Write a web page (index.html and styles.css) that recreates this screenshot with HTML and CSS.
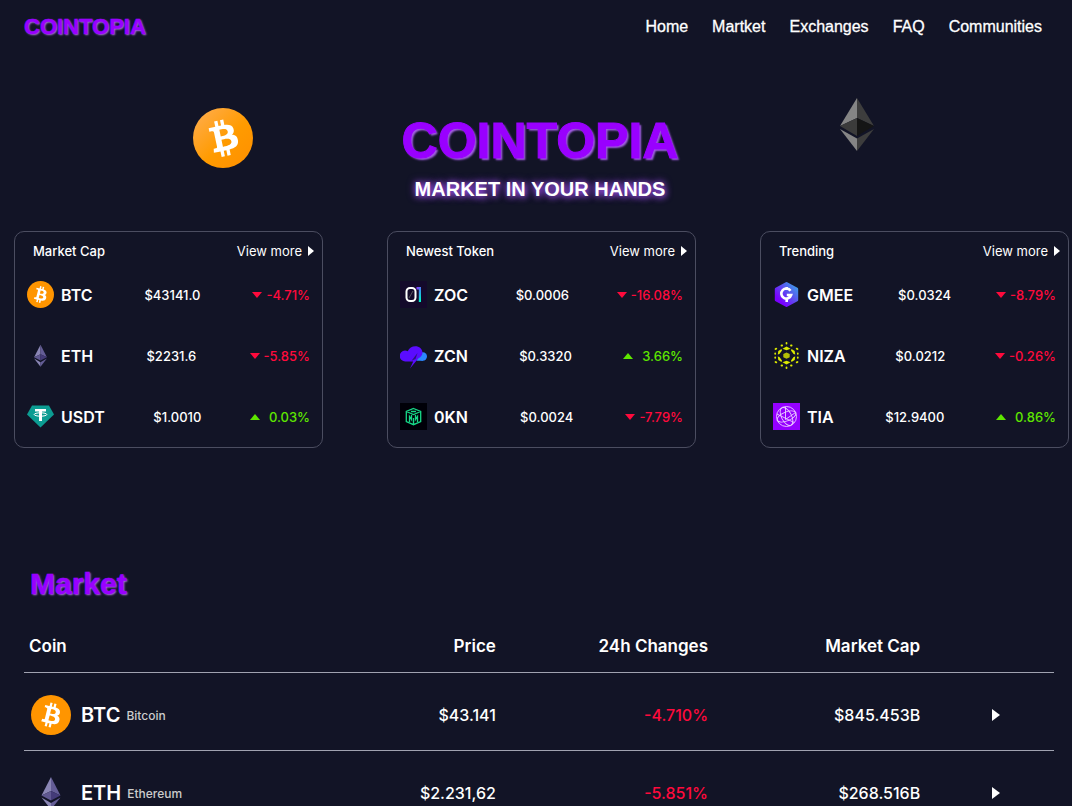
FILE: index.html
```html
<!DOCTYPE html>
<html lang="en">
<head>
<meta charset="utf-8">
<meta name="viewport" content="width=device-width, initial-scale=1">
<title>Cointopia</title>
<link rel="stylesheet" href="styles.css">
</head>
<body>
<svg class="defs" aria-hidden="true">
  <defs>
    <linearGradient id="orange" x1="0" y1="0" x2="1" y2="1"><stop offset="0.1" stop-color="#ffab45"/><stop offset="0.55" stop-color="#ff9b00"/><stop offset="1" stop-color="#ff8f00"/></linearGradient>
    <linearGradient id="gm" x1="1" y1="0" x2="0.2" y2="0.8"><stop offset="0" stop-color="#3aa8e8"/><stop offset="0.5" stop-color="#5a55ee"/><stop offset="1" stop-color="#7a00ff"/></linearGradient>
    <linearGradient id="one" x1="0" y1="0" x2="0.6" y2="1"><stop offset="0.1" stop-color="#8b3dff"/><stop offset="0.5" stop-color="#3c8df0"/><stop offset="1" stop-color="#00f0c8"/></linearGradient>
  </defs>
  <symbol id="b-sign" viewBox="0 0 32 32"><path d="M23.189 14.02c.314-2.096-1.283-3.223-3.465-3.975l.708-2.84-1.728-.43-.69 2.765c-.454-.114-.92-.22-1.385-.326l.695-2.783L15.596 6l-.708 2.839c-.376-.086-.746-.17-1.104-.26l.002-.009-2.384-.595-.46 1.846s1.283.294 1.256.312c.7.175.826.638.805 1.006l-.806 3.235c.048.012.11.03.18.057l-.183-.045-1.13 4.532c-.086.212-.303.531-.793.41.018.025-1.256-.313-1.256-.313l-.858 1.978 2.25.561c.418.105.828.215 1.231.318l-.715 2.872 1.727.43.708-2.84c.472.127.93.245 1.378.357l-.706 2.828 1.728.43.715-2.866c2.948.558 5.164.333 6.097-2.333.752-2.146-.037-3.385-1.588-4.192 1.13-.26 1.98-1.003 2.207-2.538zm-3.95 5.538c-.533 2.147-4.148.986-5.32.695l.95-3.805c1.172.293 4.929.872 4.37 3.11zm.535-5.569c-.487 1.953-3.495.96-4.47.717l.86-3.45c.975.243 4.118.696 3.61 2.733z"/></symbol>
  <symbol id="btc" viewBox="0 0 32 32"><circle cx="16" cy="16" r="16" fill="#ff9500"/><use href="#b-sign" fill="#fff"/></symbol>
  <symbol id="eth" viewBox="0 0 40 40"><path fill="#8a86b5" d="M20 4v14L10.500 22.500z"/><path fill="#645d96" d="M20 4v14L29.500 22.500z"/><path fill="#5f5891" d="M20 18v9.500L10.500 22.500z"/><path fill="#443b78" d="M20 18v9.500L29.500 22.500z"/><path fill="#8a86b5" d="M10.500 24.500L20 30v6.500z"/><path fill="#645d96" d="M29.500 24.500L20 30v6.500z"/></symbol>
</svg>

<header class="topbar">
  <a class="logo" href="#">COINTOPIA</a>
  <nav class="nav">
    <a href="#">Home</a><a href="#market">Martket</a><a href="#">Exchanges</a><a href="#">FAQ</a><a href="#">Communities</a>
  </nav>
</header>

<main>
  <section class="hero">
    <svg class="hero-btc" viewBox="0 0 32 32" aria-hidden="true"><circle cx="16" cy="16" r="16" fill="url(#orange)"/><use href="#b-sign" fill="#fff" transform="rotate(-26 16 16)"/></svg>
    <div class="hero-text">
      <h1 class="title">COINTOPIA</h1>
      <p class="tagline">MARKET IN YOUR HANDS</p>
    </div>
    <svg class="hero-eth" viewBox="0 0 34 54" aria-hidden="true"><path fill="#858585" d="M17 0v20L0 28z"/><path fill="#3d3d3d" d="M17 0v20l17 8z"/><path fill="#3b3b3b" d="M17 20v18L0 28z"/><path fill="#151515" d="M17 20v18l17-10z"/><path fill="#858585" d="M0 31l17 9.500V53z"/><path fill="#3d3d3d" d="M34 31l-17 9.500V53z"/></svg>
  </section>

  <section class="cards">
    <article class="card">
      <header class="card-head"><h2 class="card-title">Market Cap</h2><a class="more" href="#">View more<span class="arrow"></span></a></header>
      <ul class="coins">
        <li class="coin"><span class="coin-id"><svg class="icon" viewBox="0 0 32 32"><use href="#btc"/></svg>BTC</span><span class="price">$43141.0</span><span class="change down">-4.71%</span></li>
        <li class="coin"><span class="coin-id"><svg class="icon" viewBox="0 0 40 40"><use href="#eth"/></svg>ETH</span><span class="price">$2231.6</span><span class="change down">-5.85%</span></li>
        <li class="coin"><span class="coin-id"><svg class="icon" viewBox="0 0 27 27"><path fill="#0c9c92" d="M5 2.500h17L27 11.500 13.500 24.500 0 11.500z"/><path fill="#fff" d="M8 6h11v2.400h-4V18h-3V8.400H8z"/><ellipse cx="13.500" cy="11.500" rx="6.300" ry="1.700" fill="none" stroke="#fff"/></svg>USDT</span><span class="price">$1.0010</span><span class="change up">0.03%</span></li>
      </ul>
    </article>
    <article class="card">
      <header class="card-head"><h2 class="card-title">Newest Token</h2><a class="more" href="#">View more<span class="arrow"></span></a></header>
      <ul class="coins">
        <li class="coin"><span class="coin-id"><svg class="icon" viewBox="0 0 27 27"><path fill="#140a2b" d="M0 0h27v27H0z"/><rect x="6.500" y="7" width="9" height="13" rx="3.500" fill="none" stroke="#fff" stroke-width="2"/><path d="M9 17l4-7" stroke="#777" stroke-width=".7"/><path fill="url(#one)" d="M16.500 6H21v15h-2.200V8.500h-2.300z"/></svg>ZOC</span><span class="price">$0.0006</span><span class="change down">-16.08%</span></li>
        <li class="coin"><span class="coin-id"><svg class="icon" viewBox="0 0 27 27"><circle cx="22.800" cy="14.500" r="4.200" fill="#2b86ff"/><path fill="#2b86ff" d="M15 16h8v2.700h-6z"/><path fill="#5a0cff" d="M5 8.500c1 0 2 .2 2.800.7C9.200 6 12 4.200 15.300 4.200c4 0 7 2.600 7.200 6.300 0 2.500-1.500 4.500-4 5.800L10 26.500l3.200-7H5.500A5.200 5.200 0 0 1 5 8.500z"/><path fill="#121426" d="M17.500 11l-6 7.800 4-1.800z" opacity=".6"/></svg>ZCN</span><span class="price">$0.3320</span><span class="change up">3.66%</span></li>
        <li class="coin"><span class="coin-id"><svg class="icon" viewBox="0 0 27 27"><path fill="#000008" d="M0 0h27v27H0z"/><path fill="none" stroke="#17d888" stroke-width="1.300" d="M13.500 5.500l7.200 3v10l-7.200 3.200-7.200-3.200v-10zM6.300 8.500l7.200 3 7.200-3M13.500 15v6.500M9.500 19v-5.500l2 3V12M17.500 19v-5.500l-2 3V12M11 8.500h5"/></svg>0KN</span><span class="price">$0.0024</span><span class="change down">-7.79%</span></li>
      </ul>
    </article>
    <article class="card">
      <header class="card-head"><h2 class="card-title">Trending</h2><a class="more" href="#">View more<span class="arrow"></span></a></header>
      <ul class="coins">
        <li class="coin"><span class="coin-id"><svg class="icon" viewBox="0 0 27 27"><path fill="url(#gm)" stroke="url(#gm)" stroke-width="3" stroke-linejoin="round" d="M13.500 2.500l10.200 5.500v11l-10.200 5.500L3.300 19V8z"/><path fill="none" stroke="#fff" stroke-width="2.600" d="M17.500 9.800a5 5 0 1 0 .6 4.200h-4.300M13.700 6v3M13.700 18v3"/></svg>GMEE</span><span class="price">$0.0324</span><span class="change down">-8.79%</span></li>
        <li class="coin"><span class="coin-id"><svg class="icon" viewBox="0 0 27 27"><g fill="#dcea00"><path d="M13.500 4.500l4 2.200-4 1.500-4-1.500zM13.500 22.500l4-2.200-4-1.500-4 1.500zM5.300 9l3.200-2 .5 1.500-2.600 3.500-1.600.5zM21.700 9l-3.200-2-.5 1.500 2.600 3.500 1.600.5zM5.300 18l3.200 2 .5-1.500L6.400 15l-1.600-.5zM21.700 18l-3.200 2-.5-1.500 2.600-3.500 1.600-.5z"/><path d="M10.300 12l3.200-1.500 3.200 1.500v3.200l-3.200 1.500-3.200-1.500z" opacity=".8"/></g><g fill="none" stroke="#dcea00" stroke-width="1.800" stroke-linecap="round"><path d="M13.500 1v.5M13.500 25.500v.5M8.500 3.500h.6M18 3.500h.6M8.500 23.500h.6M18 23.500h.6M2.500 7l.8-.4M24.500 7l-.8-.4M2.500 20l.8.4M24.500 20l-.8.4M2.200 11.500v.3M24.800 11.500v.3M2.200 15.500v.3M24.800 15.500v.3"/></g></svg>NIZA</span><span class="price">$0.0212</span><span class="change down">-0.26%</span></li>
        <li class="coin"><span class="coin-id"><svg class="icon" viewBox="0 0 27 27"><path fill="#9500ff" d="M0 0h27v27H0z"/><g fill="none" stroke="#ecd0ff" stroke-width=".9"><circle cx="13.500" cy="13.500" r="10"/><ellipse cx="13.500" cy="13.500" rx="10" ry="4.500" transform="rotate(-22 13.500 13.500)"/><ellipse cx="13.500" cy="13.500" rx="9.800" ry="5" transform="rotate(62 13.500 13.500)"/><path d="M12.500 4v12.500l10-7M4 11l17 8.500"/></g></svg>TIA</span><span class="price">$12.9400</span><span class="change up">0.86%</span></li>
      </ul>
    </article>
  </section>

  <section class="market" id="market">
    <h2 class="market-title">Market</h2>
    <table class="table">
      <thead>
        <tr><th class="col-coin" scope="col">Coin</th><th class="col-price" scope="col">Price</th><th class="col-num" scope="col">24h Changes</th><th class="col-num" scope="col">Market Cap</th><td class="col-go"></td></tr>
      </thead>
      <tbody>
        <tr><td><div class="asset"><svg class="asset-icon" viewBox="0 0 32 32"><use href="#btc"/></svg><b class="symbol">BTC</b><span class="name">Bitcoin</span></div></td><td>$43.141</td><td class="loss">-4.710%</td><td>$845.453B</td><td><a class="go" href="#" aria-label="Bitcoin details"><span class="arrow arrow-lg"></span></a></td></tr>
        <tr><td><div class="asset"><svg class="asset-icon" viewBox="0 0 40 40"><use href="#eth"/></svg><b class="symbol">ETH</b><span class="name">Ethereum</span></div></td><td>$2.231,62</td><td class="loss">-5.851%</td><td>$268.516B</td><td><a class="go" href="#" aria-label="Ethereum details"><span class="arrow arrow-lg"></span></a></td></tr>
      </tbody>
    </table>
  </section>
</main>
</body>
</html>
```
FILE: styles.css
```css
* {
  box-sizing: border-box;
}

body {
  margin: 0;
  height: 100vh;
  overflow-y: auto;
  scrollbar-width: none;
  background: #121426;
  color: #fff;
  font-family: Inter, "Liberation Sans", sans-serif;
}

h1, h2, p, ul {
  margin: 0;
  padding: 0;
}

a {
  color: inherit;
  text-decoration: none;
}

.defs {
  position: absolute;
  width: 0;
  height: 0;
}

.topbar {
  display: flex;
  align-items: center;
  justify-content: space-between;
  height: 54px;
  padding: 0 30px 0 24px;
  font-family: "Liberation Sans", Arial, sans-serif;
}

.logo,
.title,
.market-title {
  color: #9900ff;
  font-family: "Liberation Sans", Arial, sans-serif;
  font-weight: 700;
  text-shadow: 2px 2px 2px #a45fe6;
}

.logo,
.market-title {
  text-shadow: 1px 1px 2px #b47ae8;
  -webkit-text-stroke: 0.5px #9900ff;
}

.logo {
  font-size: 22px;
}

.title {
  font-size: 50px;
  line-height: 58px;
  -webkit-text-stroke: 1px #9900ff;
}

.nav {
  display: flex;
  gap: 24px;
  font-size: 16px;
  -webkit-text-stroke: 0.3px #fff;
}

.hero {
  display: grid;
  grid-template-columns: 1fr 1fr 1fr;
  justify-items: center;
  height: 177px;
  padding: 44px 56px 0 64px;
}

.hero-btc {
  width: 60px;
  height: 60px;
  margin-top: 10px;
}

.hero-eth {
  width: 34px;
  height: 54px;
}

.hero-text {
  padding-top: 14px;
  text-align: center;
  font-family: "Liberation Sans", Arial, sans-serif;
}

.tagline {
  padding-top: 7px;
  font-size: 20px;
  line-height: 24px;
  font-weight: 700;
  white-space: nowrap;
  text-shadow: 1px 1px 6px #a855f7, 0 0 8px #7a3cc0;
}

.cards {
  display: grid;
  grid-template-columns: repeat(3, 1fr);
  gap: 64px;
  padding: 0 3px 0 14px;
}

.card {
  padding: 6px 12px 0;
  border: 1px solid #4b4d60;
  border-radius: 10px;
}

.card-head {
  display: flex;
  align-items: center;
  justify-content: space-between;
  height: 26px;
  padding-left: 6px;
}

.card-title {
  font-size: 13px;
  font-weight: 500;
}

.more {
  display: flex;
  align-items: center;
  gap: 6px;
  margin-right: -4px;
  font-size: 13px;
}

.arrow {
  border-left: 6px solid #fff;
  border-top: 5px solid transparent;
  border-bottom: 5px solid transparent;
}

.coins {
  list-style: none;
}

.coin {
  display: flex;
  align-items: center;
  justify-content: space-between;
  height: 61px;
  font-size: 13px;
}

.coin-id {
  display: flex;
  align-items: center;
  gap: 7px;
  font-size: 16px;
  font-weight: 600;
}

.icon {
  width: 27px;
  height: 27px;
}

.price {
  font-weight: 500;
}

.change {
  display: flex;
  align-items: center;
  font-weight: 500;
}

.change::before {
  content: "";
  border-left: 5px solid transparent;
  border-right: 5px solid transparent;
}

.down,
.loss {
  color: #ff0a3c;
}

.up {
  color: #5ee600;
}

.down::before {
  margin-right: 4px;
  border-top: 6px solid #ff0a3c;
}

.up::before {
  margin-right: 9px;
  border-bottom: 6px solid #5ee600;
}

.market {
  padding: 118px 18px 0 24px;
}

.market-title {
  padding-left: 6px;
  font-size: 30px;
  line-height: 36px;
}

.table {
  width: 100%;
  table-layout: fixed;
  border-collapse: collapse;
  margin-top: 19px;
}

.table th {
  height: 51px;
  padding: 0 4px;
  font-size: 17px;
  font-weight: 600;
  text-align: right;
  white-space: nowrap;
}

.table .col-coin {
  width: 26%;
  padding-left: 5px;
  text-align: left;
}

.col-price {
  width: 20.2%;
}

.col-num {
  width: 20.6%;
}

.table tr {
  border-bottom: 1px solid #a0a2b0;
}

.table tbody td {
  height: 78px;
  padding: 8px 4px 0;
  font-size: 16px;
  font-weight: 500;
  text-align: right;
}

.asset {
  display: flex;
  align-items: center;
  gap: 6px;
  padding-left: 3px;
}

.asset-icon {
  width: 40px;
  height: 40px;
}

.symbol {
  padding-left: 4px;
  font-size: 20px;
  font-weight: 600;
}

.name {
  color: #ccc;
  font-size: 12px;
}

.go {
  display: inline-flex;
  padding-right: 50px;
}

.arrow-lg {
  border-left-width: 8px;
  border-top-width: 6px;
  border-bottom-width: 6px;
}
```
